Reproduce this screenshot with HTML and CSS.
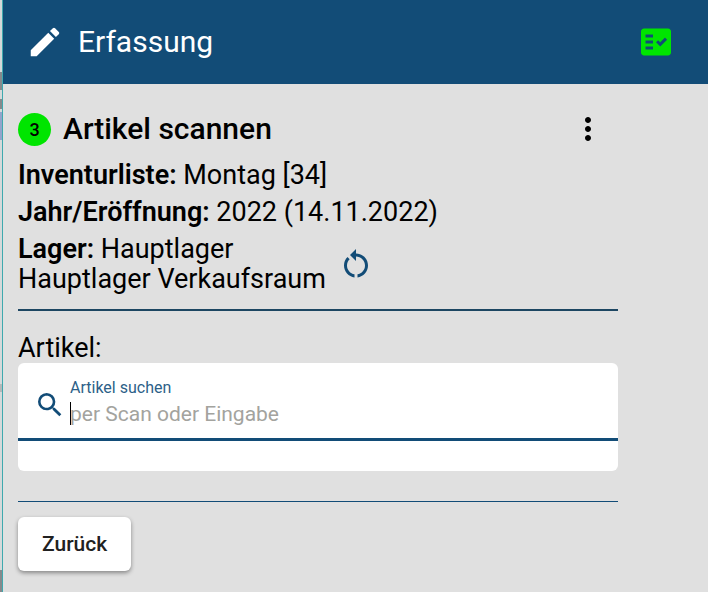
FILE: index.html
```html
<!DOCTYPE html>
<html lang="de">
<head>
<meta charset="utf-8">
<meta name="viewport" content="width=device-width, initial-scale=1">
<title>Erfassung</title>
<link rel="stylesheet" href="styles.css">
</head>
<body>
<div class="backdrop"></div>
<div class="panel">
  <header class="toolbar">
    <svg class="icon icon-edit" viewBox="0 0 24 24" aria-hidden="true"><path d="M3 17.25V21h3.75L17.81 9.94l-3.75-3.75L3 17.25zM20.71 7.04a1 1 0 0 0 0-1.41l-2.34-2.34a1 1 0 0 0-1.41 0l-1.83 1.83 3.75 3.75 1.83-1.83z"/></svg>
    <h1 class="toolbar-title">Erfassung</h1>
    <button class="icon-button check-button" type="button" aria-label="Liste prüfen">
      <svg class="icon" viewBox="0 0 24 24" aria-hidden="true"><path fill-rule="evenodd" d="M20 3H4c-1.1 0-2 .9-2 2v14c0 1.1.9 2 2 2h16c1.1 0 2-.9 2-2V5c0-1.1-.9-2-2-2zM10 17H5v-2h5v2zm0-4H5v-2h5v2zm0-4H5V7h5v2zm4.82 6L12 12.16l1.41-1.41 1.41 1.42L17.99 9l1.42 1.42L14.82 15z"/></svg>
    </button>
  </header>
  <main class="content">
    <div class="step">
      <span class="step-number">3</span>
      <h2 class="step-title">Artikel scannen</h2>
      <button class="icon-button menu-button" type="button" aria-label="Menü">
        <svg class="icon" viewBox="0 0 24 24" aria-hidden="true"><path d="M12 8c1.1 0 2-.9 2-2s-.9-2-2-2-2 .9-2 2 .9 2 2 2zm0 2c-1.1 0-2 .9-2 2s.9 2 2 2 2-.9 2-2-.9-2-2-2zm0 6c-1.1 0-2 .9-2 2s.9 2 2 2 2-.9 2-2-.9-2-2-2z"/></svg>
      </button>
    </div>
    <div class="details">
      <p><b>Inventurliste:</b> Montag [34]</p>
      <p><b>Jahr/Eröffnung:</b> 2022 (14.11.2022)</p>
      <div class="storage">
        <p><b>Lager:</b> Hauptlager<br>Hauptlager Verkaufsraum</p>
        <button class="icon-button reset-button" type="button" aria-label="Lager zurücksetzen">
          <svg class="icon" viewBox="0 0 24 24" aria-hidden="true"><path d="M12 5V2L8 6l4 4V7c3.31 0 6 2.69 6 6 0 2.97-2.17 5.43-5 5.91v2.02c3.95-.49 7-3.85 7-7.93 0-4.42-3.58-8-8-8zM6 13c0-1.65.67-3.15 1.76-4.24L6.34 7.34A8.014 8.014 0 0 0 4 13c0 4.08 3.05 7.44 7 7.93v-2.02c-2.83-.48-5-2.94-5-5.91z"/></svg>
        </button>
      </div>
    </div>
    <section class="article">
      <h3 class="article-title">Artikel:</h3>
      <div class="search-card">
        <div class="search-field">
          <svg class="icon icon-search" viewBox="0 0 24 24" aria-hidden="true"><path d="M15.5 14h-.79l-.28-.27A6.471 6.471 0 0 0 16 9.5 6.5 6.5 0 1 0 9.5 16c1.61 0 3.09-.59 4.23-1.57l.27.28v.79l5 4.99L20.49 19l-4.99-5zm-6 0C7.01 14 5 11.99 5 9.5S7.01 5 9.5 5 14 7.01 14 9.5 11.99 14 9.5 14z"/></svg>
          <div class="search-text">
            <label for="article-search">Artikel suchen</label>
            <div class="input-row">
              <span class="caret"></span>
              <input id="article-search" type="text" placeholder="per Scan oder Eingabe">
            </div>
          </div>
        </div>
      </div>
    </section>
    <button class="back-button" type="button">Zurück</button>
  </main>
</div>
</body>
</html>
```

FILE: styles.css
```css
* {
  box-sizing: border-box;
}

body {
  display: flex;
  min-height: 100vh;
  margin: 0;
  background: #e0e0e0;
  color: #000;
  font-family: Roboto, "Liberation Sans", sans-serif;
  font-size: 27px;
  font-weight: 400;
  line-height: 30px;
}

h1, h2, h3, p {
  margin: 0;
}

b {
  font-weight: 600;
}

button {
  font-family: inherit;
  cursor: pointer;
}

.backdrop {
  width: 3px;
  border-right: 1px solid #3fa9ae;
  background: linear-gradient(#d5d9da 72px, #85898c 72px 90px, #d5d9da 90px 99px, #85898c 99px 109px, #d5d9da 109px 112px, #93a4cb 112px 140px, #d5d9da 140px 384px, #b5b8b9 384px 392px, #d5d9da 392px 570px, #85898c 570px);
}

.panel {
  flex: 1;
}

.icon {
  display: block;
  width: 36px;
  height: 36px;
  fill: currentColor;
}

.icon-button {
  padding: 0;
  border: 0;
  background: none;
}

.toolbar {
  display: flex;
  align-items: center;
  height: 84px;
  padding: 0 34px 0 23px;
  background: #124c77;
  color: #fff;
}

.icon-edit {
  width: 38px;
  height: 38px;
}

.toolbar-title {
  flex: 1;
  padding-left: 14px;
  font-size: 30px;
  font-weight: 400;
}

.check-button {
  color: #00e500;
}

.content {
  max-width: 630px;
  padding: 27px 15px 20px;
}

.step {
  display: flex;
  align-items: center;
  padding-right: 12px;
}

.step-number {
  width: 33px;
  height: 33px;
  border-radius: 50%;
  background: #00e500;
  font-size: 18px;
  font-weight: 500;
  line-height: 33px;
  text-align: center;
}

.step-title {
  flex: 1;
  padding-left: 12px;
  font-size: 30px;
  font-weight: 500;
}

.details {
  display: grid;
  gap: 7px;
  padding: 13px 0 15px;
  border-bottom: 2px solid #1d4662;
}

.storage {
  display: flex;
  align-items: center;
  gap: 12px;
}

.reset-button {
  color: #124c77;
}

.article {
  padding: 22px 0 30px;
  border-bottom: 1px solid #124c77;
}

.article-title {
  font-size: 27px;
  font-weight: 400;
}

.search-card {
  padding-bottom: 30px;
  border-radius: 6px;
  background: #fff;
}

.search-field {
  display: flex;
  align-items: center;
  gap: 4px;
  padding: 14px 16px 10px;
  border-bottom: 3px solid #124c77;
}

.icon-search {
  width: 32px;
  height: 32px;
  margin-top: 4px;
  color: #124c77;
}

.search-text {
  flex: 1;
}

.search-text label {
  display: block;
  color: #2d5f88;
  font-size: 16px;
  font-weight: 400;
  line-height: 22px;
}

.input-row {
  display: flex;
  align-items: center;
  height: 29px;
}

.caret {
  width: 1px;
  height: 23px;
  background: #000;
}

.input-row input {
  flex: 1;
  min-width: 0;
  margin-left: -1px;
  padding: 0;
  border: 0;
  outline: 0;
  background: none;
  font-family: inherit;
  font-size: 21px;
}

.input-row input::placeholder {
  color: #a3a39e;
}

.back-button {
  margin-top: 15px;
  padding: 0 24px;
  border: 0;
  border-radius: 6px;
  background: #fff;
  box-shadow: 0 2px 4px rgba(0, 0, 0, 0.4);
  color: #212121;
  font-size: 21px;
  font-weight: 500;
  line-height: 54px;
}
```
